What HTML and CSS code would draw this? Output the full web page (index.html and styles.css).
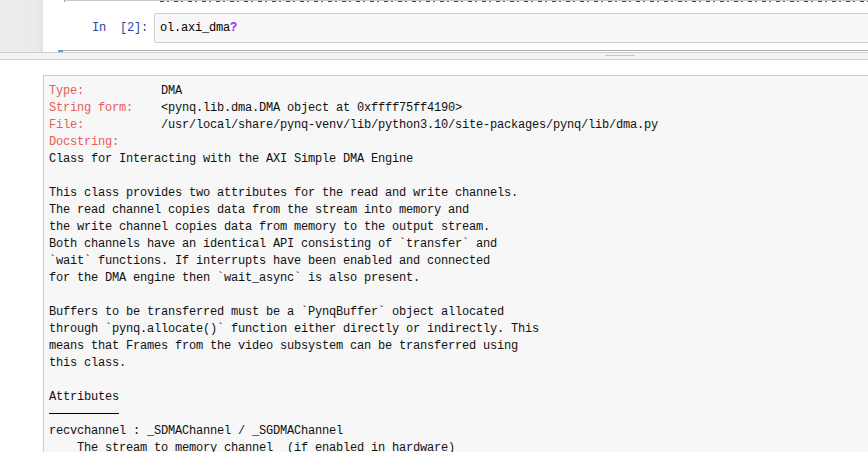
FILE: index.html
```html
<!DOCTYPE html>
<html lang="en">

<head>
  <meta charset="UTF-8">
  <title>Notebook - ol.axi_dma?</title>
  <link rel="stylesheet" href="styles.css">
</head>

<body>

  <!-- Notebook area (scrolled) -->
  <div class="notebook-area">
    <div class="gutter"></div>
    <div class="notebook">
      <div class="prev-output"><div class="prev-text"></div></div>
      <div class="cell">
        <div class="prompt">In&nbsp;&nbsp;[2]:</div>
        <div class="input"><code>ol.axi_dma<span class="q">?</span></code></div>
      </div>
      <div class="cell-edge"><span class="mark"></span><span class="line"></span></div>
    </div>
  </div>

  <!-- Pager divider -->
  <div class="divider"><span class="handle"></span></div>

  <!-- Pager -->
  <div class="pager-wrap">
    <div class="pager">
<pre><span class="lbl">Type:</span>           DMA
<span class="lbl">String form:</span>    &lt;pynq.lib.dma.DMA object at 0xffff75ff4190&gt;
<span class="lbl">File:</span>           /usr/local/share/pynq-venv/lib/python3.10/site-packages/pynq/lib/dma.py
<span class="lbl">Docstring:</span>
Class for Interacting with the AXI Simple DMA Engine

This class provides two attributes for the read and write channels.
The read channel copies data from the stream into memory and
the write channel copies data from memory to the output stream.
Both channels have an identical API consisting of `transfer` and
`wait` functions. If interrupts have been enabled and connected
for the DMA engine then `wait_async` is also present.

Buffers to be transferred must be a `PynqBuffer` object allocated
through `pynq.allocate()` function either directly or indirectly. This
means that Frames from the video subsystem can be transferred using
this class.

Attributes
<span class="rule">----------</span>
recvchannel : _SDMAChannel / _SGDMAChannel
    The stream to memory channel  (if enabled in hardware)</pre>
    </div>
  </div>

</body>

</html>
```

FILE: styles.css
```css
/* Global */
body {
  margin: 0;
  padding: 0;
  background-color: #ffffff;
  color: #000000;
  font-family: "Liberation Mono", "DejaVu Sans Mono", monospace;
  font-size: 12px;
  letter-spacing: -0.2px;
  height: 452px;
  overflow: hidden;
  display: flex;
  flex-direction: column;
}

/* Notebook area */
.notebook-area {
  display: flex;
  height: 52px;
  overflow: hidden;
}

.gutter {
  width: 43px;
  background: linear-gradient(to right, #ececec 0, #ebebeb 36px, #e3e3e3 43px);
}

.notebook {
  flex: 1;
  background-color: #ffffff;
  overflow: hidden;
}

.prev-output {
  margin-left: 21px;
  height: 2px;
  border-left: 1px solid #9a9a9a;
  border-top: 1px solid #c8c8c8;
  box-sizing: border-box;
}

.prev-text {
  margin-left: 95px;
  height: 1px;
  background: repeating-linear-gradient(90deg, #444 0 4px, transparent 4px 7px, #666 7px 9px, transparent 9px 14px);
}

.cell {
  display: flex;
  margin-top: 11px;
}

.prompt {
  width: 105px;
  margin-right: 6px;
  text-align: right;
  color: #303f9f;
  line-height: 30px;
  white-space: pre;
}

.input {
  flex: 1;
  height: 30px;
  box-sizing: border-box;
  margin-right: -4px;
  border: 1px solid #cfcfcf;
  border-radius: 2px;
  background-color: #f7f7f7;
  padding-left: 5px;
  line-height: 28px;
}

.input code {
  font-family: inherit;
}

.q {
  color: #aa22ff;
  font-weight: bold;
}

.cell-edge {
  display: flex;
  margin-top: 7px;
  margin-left: 15px;
  height: 2px;
}

.mark {
  width: 5px;
  background-color: #42a5f5;
}

.line {
  flex: 1;
  height: 1px;
  background-color: #ababab;
}

/* Pager divider */
.divider {
  height: 8px;
  box-sizing: border-box;
  border-top: 1px solid #cccccc;
  border-bottom: 1px solid #cccccc;
  background-color: #f3f3f3;
  padding-top: 2px;
}

.handle {
  display: block;
  margin-left: 605px;
  width: 30px;
  height: 1px;
  background-color: #c8c8c8;
}

/* Pager */
.pager-wrap {
  flex: 1;
  padding: 15px 0 0 43px;
  min-height: 0;
}

.pager {
  height: 100%;
  border-top: 1px solid #cfcfcf;
  border-left: 1px solid #cfcfcf;
  background-color: #f7f7f7;
  overflow: hidden;
}

.pager pre {
  margin: 0;
  padding: 7px 0 0 5px;
  font-family: inherit;
  font-size: 12px;
  line-height: 17px;
  color: #111111;
}

.lbl {
  color: #e75c58;
}

.rule {
  color: transparent;
  text-decoration: line-through;
  text-decoration-color: #000000;
  text-decoration-thickness: 1px;
}
```
